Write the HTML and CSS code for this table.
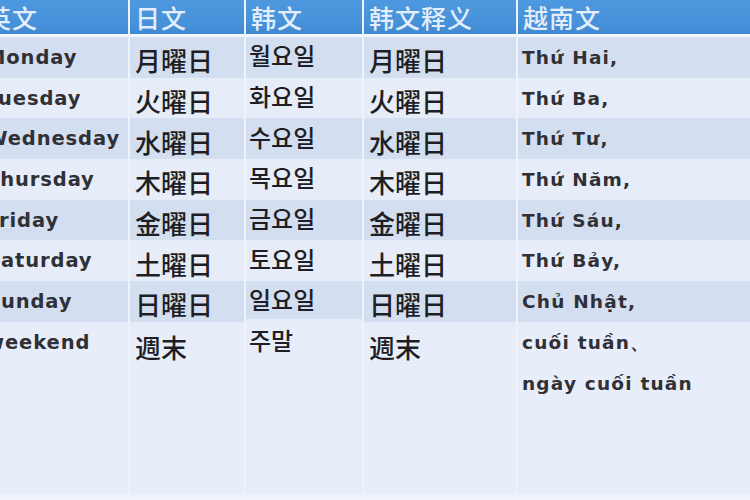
FILE: index.html
```html
<!DOCTYPE html>
<html lang="zh">
<head>
<meta charset="utf-8">
<link rel="stylesheet" href="styles.css">
</head>
<body>
<div class="sheet">
  <div class="grid">
    <div class="hd">英文</div><div class="hd">日文</div><div class="hd">韩文</div><div class="hd">韩文释义</div><div class="hd">越南文</div>

    <div class="c dk en">Monday</div><div class="c dk jp">月曜日</div><div class="c dk kr">월요일</div><div class="c dk jp">月曜日</div><div class="c dk vi">Thứ Hai,</div>
    <div class="c lt en">Tuesday</div><div class="c lt jp">火曜日</div><div class="c lt kr">화요일</div><div class="c lt jp">火曜日</div><div class="c lt vi">Thứ Ba,</div>
    <div class="c dk en">Wednesday</div><div class="c dk jp">水曜日</div><div class="c dk kr">수요일</div><div class="c dk jp">水曜日</div><div class="c dk vi">Thứ Tư,</div>
    <div class="c lt en">Thursday</div><div class="c lt jp">木曜日</div><div class="c lt kr">목요일</div><div class="c lt jp">木曜日</div><div class="c lt vi">Thứ Năm,</div>
    <div class="c dk en">Friday</div><div class="c dk jp">金曜日</div><div class="c dk kr">금요일</div><div class="c dk jp">金曜日</div><div class="c dk vi">Thứ Sáu,</div>
    <div class="c lt en">Saturday</div><div class="c lt jp">土曜日</div><div class="c lt kr">토요일</div><div class="c lt jp">土曜日</div><div class="c lt vi">Thứ Bảy,</div>
    <div class="c dk en">Sunday</div><div class="c dk jp">日曜日</div><div class="c dk kr">일요일</div><div class="c dk jp">日曜日</div><div class="c dk vi">Chủ Nhật,</div>

    <div class="c last en">weekend</div><div class="c last jp">週末</div><div class="c last kr">주말</div><div class="c last jp">週末</div><div class="c last vi">cuối tuần、<br>ngày cuối tuần</div>
  </div>
</div>
</body>
</html>
```
FILE: styles.css
```css
html, body {
  margin: 0;
  padding: 0;
  width: 750px;
  height: 500px;
  overflow: hidden;
  background: #f3f7fd;
}
.sheet {
  width: 764px;
  height: 500px;
  margin-left: -14px;
  overflow: hidden;
}
.grid {
  display: grid;
  grid-template-columns: 142px 114px 116px 152px 1fr;
  grid-template-rows: 34px 40.7px 40.7px 40.7px 40.7px 40.7px 40.7px 40.7px 180px;
  column-gap: 2px;
  background: #eef3fb;
}
.hd {
  background: linear-gradient(#4d98de, #4590d8 80%, #3e86cf);
  color: #e3eefa;
  font-family: "Noto Sans CJK SC", sans-serif;
  font-weight: 500;
  font-size: 25px;
  line-height: 34px;
  padding-left: 5px;
  border-bottom: 3px solid #f2f7fd;
  margin-bottom: -3px;
  letter-spacing: 1px;
}
.hd:first-child { padding-left: 0; }
.c {
  display: flex;
  align-items: center;
  padding-left: 5px;
  color: #1e1e24;
  margin-top: 3px;
  margin-bottom: -3px;
}
.dk { background: #d3dff1; }
.lt { background: #e7edf8; }
.last {
  background: #e8eef9;
  align-items: flex-start;
  margin-bottom: 5px;
}
.en {
  font-family: "DejaVu Sans", sans-serif;
  font-weight: bold;
  font-size: 19.5px;
  letter-spacing: 0.9px;
  padding-left: 0;
  color: #303036;
}
.vi {
  font-family: "DejaVu Sans", sans-serif;
  font-weight: bold;
  font-size: 18.5px;
  padding-left: 4px;
  letter-spacing: 1.2px;
  color: #303036;
}
.jp {
  font-family: "Noto Sans CJK JP", sans-serif;
  font-weight: 500;
  font-size: 26px;
  padding-top: 5px;
}
.kr {
  font-family: "Noto Sans CJK KR", sans-serif;
  font-weight: 500;
  font-size: 24px;
  padding-left: 3px;
  padding-bottom: 5px;
}
.last.en, .last.vi { line-height: 41px; }
.last.jp { line-height: 41px; padding-top: 4px; }
.last.kr { line-height: 41px; padding-top: 0; padding-bottom: 0; margin-top: 0; }
```
